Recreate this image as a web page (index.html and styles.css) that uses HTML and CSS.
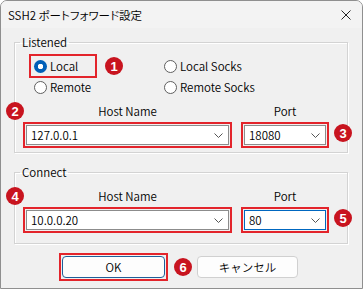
FILE: index.html
```html
<!DOCTYPE html>
<html lang="ja">
<head>
  <meta charset="UTF-8">
  <title>SSH2 ポートフォワード設定</title>
  <link rel="stylesheet" href="styles.css">
</head>
<body>

  <div class="window">
    <div class="titlebar">
      <span class="title">SSH2 ポートフォワード設定</span>
      <svg class="close" width="10" height="10" viewBox="0 0 10 10">
        <path d="M0.5 0.5 L9.5 9.5 M9.5 0.5 L0.5 9.5" stroke="#222" stroke-width="1" fill="none"/>
      </svg>
    </div>

    <div class="content">
      <fieldset class="group listened">
        <legend>Listened</legend>
        <div class="radios">
          <div class="cell">
            <label class="mark radio local"><span class="dot on"></span>Local</label>
            <span class="badge">1</span>
          </div>
          <label class="radio"><span class="dot"></span>Local Socks</label>
          <label class="radio indent"><span class="dot"></span>Remote</label>
          <label class="radio"><span class="dot"></span>Remote Socks</label>
        </div>
        <div class="fields">
          <div class="field host">
            <span class="badge side-left">2</span>
            <div class="cap">Host Name</div>
            <div class="mark">
              <div class="combo">
                <span>127.0.0.1</span>
                <svg width="9" height="5" viewBox="0 0 9 5"><path d="M0.5 0.5 L4.5 4.5 L8.5 0.5" stroke="#555" fill="none"/></svg>
              </div>
            </div>
          </div>
          <div class="field port">
            <span class="badge side-right">3</span>
            <div class="cap">Port</div>
            <div class="mark">
              <div class="combo">
                <span>18080</span>
                <svg width="9" height="5" viewBox="0 0 9 5"><path d="M0.5 0.5 L4.5 4.5 L8.5 0.5" stroke="#555" fill="none"/></svg>
              </div>
            </div>
          </div>
        </div>
      </fieldset>

      <fieldset class="group connect">
        <legend>Connect</legend>
        <div class="fields">
          <div class="field host">
            <span class="badge side-left">4</span>
            <div class="cap">Host Name</div>
            <div class="mark">
              <div class="combo">
                <span>10.0.0.20</span>
                <svg width="9" height="5" viewBox="0 0 9 5"><path d="M0.5 0.5 L4.5 4.5 L8.5 0.5" stroke="#555" fill="none"/></svg>
              </div>
            </div>
          </div>
          <div class="field port">
            <span class="badge side-right">5</span>
            <div class="cap">Port</div>
            <div class="mark">
              <div class="combo focus">
                <span>80</span>
                <svg width="9" height="5" viewBox="0 0 9 5"><path d="M0.5 0.5 L4.5 4.5 L8.5 0.5" stroke="#555" fill="none"/></svg>
              </div>
            </div>
          </div>
        </div>
      </fieldset>

      <div class="buttons">
        <div class="mark">
          <button class="btn default">OK</button>
        </div>
        <span class="badge">6</span>
        <button class="btn">キャンセル</button>
      </div>
    </div>
  </div>

</body>
</html>
```

FILE: styles.css
```css
* {
  box-sizing: border-box;
}
body {
  margin: 0;
  background: #ffffff;
  font-family: "Noto Sans CJK JP", "Noto Sans", sans-serif;
  font-size: 11.5px;
  font-weight: 350;
  font-feature-settings: "palt";
  color: #000;
}
.window {
  width: 363px;
  height: 289px;
  border: 1px solid #8f8f8f;
  border-radius: 7px 7px 0 0;
  background: #f0f0f0;
  overflow: hidden;
}
.titlebar {
  height: 27px;
  display: flex;
  align-items: center;
  justify-content: space-between;
  padding: 0 11px 0 7px;
  background: #f3f3f3;
}
.content {
  padding: 6px 14px 0 13px;
}
.group {
  margin: 0;
  min-width: 0;
  border: 1px solid #d3d3d3;
  box-shadow: inset 1px 1px 0 #fff, 1px 1px 0 #fff;
  padding: 4px 15px 4px 8px;
}
.group legend {
  padding: 0 2px;
  margin-left: -3px;
  line-height: 16px;
}
.connect {
  margin-top: 11px;
  padding-top: 8px;
  padding-bottom: 10px;
}
.radios {
  display: grid;
  grid-template-columns: 135px auto;
  grid-template-rows: 24px 18px;
  margin-left: 6px;
}
.cell {
  display: flex;
  align-items: center;
}
.radio {
  display: flex;
  align-items: center;
  gap: 3px;
}
.radio.indent {
  padding-left: 5px;
}
.dot {
  width: 13px;
  height: 13px;
  border-radius: 50%;
  border: 1px solid #5f5f5f;
  background: #fff;
}
.dot.on {
  border: none;
  background: radial-gradient(circle, #fff 0 2.5px, #005fb8 3px);
}
.mark {
  border: 2px solid #e3242b;
  padding: 1px;
}
.mark.local {
  width: 68px;
  height: 24px;
  padding: 0 0 0 3px;
}
.badge {
  width: 18px;
  height: 18px;
  border-radius: 50%;
  background: #c8141f;
  color: #fff;
  font-family: "Liberation Sans", Arial, sans-serif;
  font-weight: bold;
  font-size: 13px;
  display: flex;
  align-items: center;
  justify-content: center;
  flex: none;
}
.cell .badge {
  margin-left: 8px;
}
.fields {
  display: flex;
  gap: 9px;
}
.listened .fields {
  margin-top: 7px;
}
.field {
  position: relative;
  display: flex;
  flex-direction: column;
  gap: 3px;
}
.field.host {
  width: 209px;
}
.field.port {
  width: 88px;
}
.side-left {
  position: absolute;
  left: -17px;
  top: -1px;
}
.side-right {
  position: absolute;
  right: -23px;
  top: 21px;
}
.cap {
  text-align: center;
  line-height: 16px;
}
.combo {
  height: 20px;
  background: #fff;
  border: 1px solid #8c8c8c;
  display: flex;
  align-items: center;
  justify-content: space-between;
  padding: 0 5px 0 4px;
}
.combo.focus {
  border-color: #0067c0;
}
.buttons {
  display: flex;
  align-items: center;
  margin: 9px 0 0 45px;
}
.buttons .badge {
  margin: 0 5px 0 6px;
}
.btn {
  display: block;
  width: 101px;
  height: 22px;
  padding: 0;
  border: 1px solid #d0d0d0;
  border-radius: 4px;
  background: #fdfdfd;
  font-family: inherit;
  font-size: 11.5px;
  font-weight: 350;
  color: #000;
}
.btn.default {
  width: 103px;
  border-color: #1f5f99;
}
```
